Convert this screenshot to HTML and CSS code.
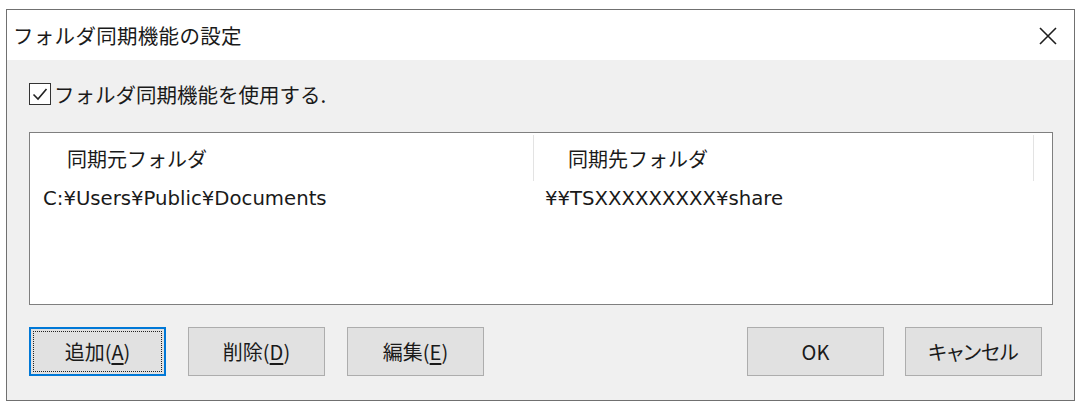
FILE: index.html
```html
<!DOCTYPE html>
<html lang="ja">
  <head>
    <meta charset="UTF-8" />
    <title>フォルダ同期機能の設定</title>
    <link rel="stylesheet" href="styles.css">
  </head>
  <body>
    <!-- Dialog window -->
    <div class="dialog">
      <div class="titlebar">
        <span class="title">フォルダ同期機能の設定</span>
        <span class="close">
          <svg width="20" height="20" viewBox="0 0 20 20">
            <path d="M2 2 L18 18 M18 2 L2 18" stroke="#1e1e1e" stroke-width="1.6" fill="none" />
          </svg>
        </span>
      </div>

      <div class="content">
        <!-- Enable option -->
        <label class="option">
          <span class="checkbox">
            <svg width="22" height="22" viewBox="0 0 22 22">
              <rect x="0.5" y="0.5" width="21" height="21" fill="#fff" stroke="#333" />
              <path d="M4.5 11.5 L9 16 L17.5 6" stroke="#222" stroke-width="1.6" fill="none" />
            </svg>
          </span>
          <span>フォルダ同期機能を使用する.</span>
        </label>

        <!-- Folder pair list -->
        <div class="listview">
          <div class="list-head">
            <div class="col col-src">同期元フォルダ</div>
            <div class="col col-dst">同期先フォルダ</div>
          </div>
          <div class="list-row">
            <div class="cell cell-src">C:¥Users¥Public¥Documents</div>
            <div class="cell cell-dst">¥¥TSXXXXXXXXX¥share</div>
          </div>
        </div>

        <!-- Buttons -->
        <div class="buttons">
          <div class="btn-group">
            <button class="btn focused">追加(<u>A</u>)</button>
            <button class="btn">削除(<u>D</u>)</button>
            <button class="btn">編集(<u>E</u>)</button>
          </div>
          <div class="btn-group right">
            <button class="btn">OK</button>
            <button class="btn kana">キャンセル</button>
          </div>
        </div>
      </div>
    </div>
  </body>
</html>
```

FILE: styles.css
```css
/* General styles */
body {
  margin: 0;
  background: #fff;
  font-family: "Noto Sans CJK JP", "Noto Sans", sans-serif;
  font-size: 20px;
  color: #1a1a1a;
}

/* Dialog frame */
.dialog {
  margin: 9px 0 0 6px;
  width: 1067px;
  height: 390px;
  border: 1px solid #707070;
  background: #f0f0f0;
  display: flex;
  flex-direction: column;
}

/* Title bar */
.titlebar {
  height: 50px;
  background: #fff;
  display: flex;
  align-items: center;
  justify-content: space-between;
  padding: 0 16px 0 6px;
}

.title {
  font-size: 20.5px;
  letter-spacing: 0.3px;
}

.close {
  display: flex;
  margin-top: 2px;
}

/* Dialog body */
.content {
  padding: 22px 21px 0 22px;
  display: flex;
  flex-direction: column;
}

.option {
  display: flex;
  align-items: center;
  gap: 3px;
  height: 24px;
  font-size: 20.5px;
}

.checkbox {
  display: flex;
}

/* List view */
.listview {
  margin-top: 26px;
  height: 171px;
  border: 1px solid #7f7f7f;
  background: #fff;
}

.list-head {
  display: flex;
  height: 48px;
}

.col {
  display: flex;
  align-items: center;
  border-right: 1px solid #e3e3e3;
  margin-top: 2px;
}

.col-src {
  width: 466px;
  padding-left: 37px;
}

.col-dst {
  width: 465px;
  padding-left: 34px;
}

.list-row {
  display: flex;
  height: 30px;
  margin-top: 2px;
  align-items: center;
  font-family: "DejaVu Sans", "Noto Sans CJK JP", sans-serif;
  font-size: 19.7px;
}

.cell-src {
  width: 490px;
  padding-left: 13px;
  border-right: 1px solid transparent;
}

.cell-dst {
  padding-left: 11px;
}

/* Button row */
.buttons {
  margin-top: 22px;
  display: flex;
  justify-content: space-between;
  padding-right: 11px;
}

.btn-group {
  display: flex;
  gap: 22px;
}

.btn-group.right {
  gap: 21px;
}

.btn {
  width: 137px;
  height: 49px;
  border: 1px solid #adadad;
  background: #e1e1e1;
  font: inherit;
  color: #1a1a1a;
  padding: 0;
}

/* proportional kana, narrower like the system UI font */
.btn.kana {
  font-feature-settings: "palt";
}

.btn u {
  text-underline-offset: 3px;
}

.btn.focused {
  border: 2px solid #0078d7;
  outline: 1px dotted #222;
  outline-offset: -5px;
}
```
